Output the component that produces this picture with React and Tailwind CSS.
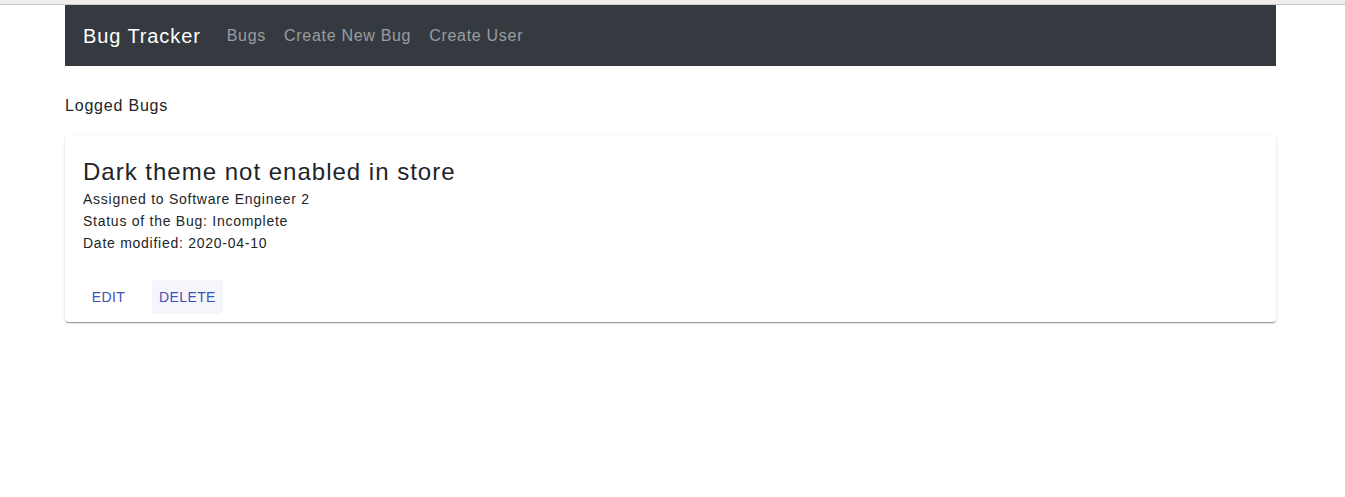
const bug = {
  title: 'Dark theme not enabled in store',
  assignee: 'Software Engineer 2',
  status: 'Incomplete',
  modified: '2020-04-10',
};

const links = ['Bugs', 'Create New Bug', 'Create User'];

export default function App() {
  return (
    <div className="min-h-[497px] bg-white font-['Liberation_Sans',Arial,sans-serif] text-[#212529]">
      {/* browser strip */}
      <div className="h-[4px] bg-[#efeeed]" />
      <div className="h-px bg-[#cbcbcb]" />

      <div className="pl-[65px] pr-[69px]">
        {/* Navbar */}
        <nav className="flex h-[61px] items-center bg-[#343a40] px-[18px]">
          <span className="mr-[17px] text-[20px] leading-[30px] tracking-[0.9px] text-white">Bug Tracker</span>
          {links.map((l) => (
            <a key={l} className="px-[9px] text-[16px] leading-6 tracking-[0.7px] text-white/50">
              {l}
            </a>
          ))}
        </nav>

        <h2 className="mt-[28px] text-[16px] leading-6 tracking-[0.8px]">Logged Bugs</h2>

        {/* Bug card */}
        <div className="mt-[18px] rounded bg-white shadow-[0px_2px_1px_-1px_rgba(0,0,0,0.25),0px_1px_1px_0px_rgba(0,0,0,0.16),0px_1px_3px_0px_rgba(0,0,0,0.14)]">
          <div className="px-[18px] pt-[20px] pb-[18px]">
            <h3 className="text-[24px] leading-[32px] tracking-[1px]">{bug.title}</h3>
            <p className="text-[14px] leading-[22px] tracking-[0.74px]">Assigned to {bug.assignee}</p>
            <p className="text-[14px] leading-[22px] tracking-[0.74px]">Status of the Bug: {bug.status}</p>
            <p className="text-[14px] leading-[22px] tracking-[0.74px]">Date modified: {bug.modified}</p>
          </div>
          <div className="flex items-center gap-[11px] pl-[11px] pt-2 pb-2">
            <button className="h-[34px] min-w-[65px] rounded px-[7px] text-[14px] tracking-[0.4px] text-[#3f51b5]">
              EDIT
            </button>
            <button className="h-[34px] min-w-[65px] rounded bg-[#f5f6fb] px-[7px] text-[14px] tracking-[0.4px] text-[#3f51b5]">
              DELETE
            </button>
          </div>
        </div>
      </div>
    </div>
  );
}
